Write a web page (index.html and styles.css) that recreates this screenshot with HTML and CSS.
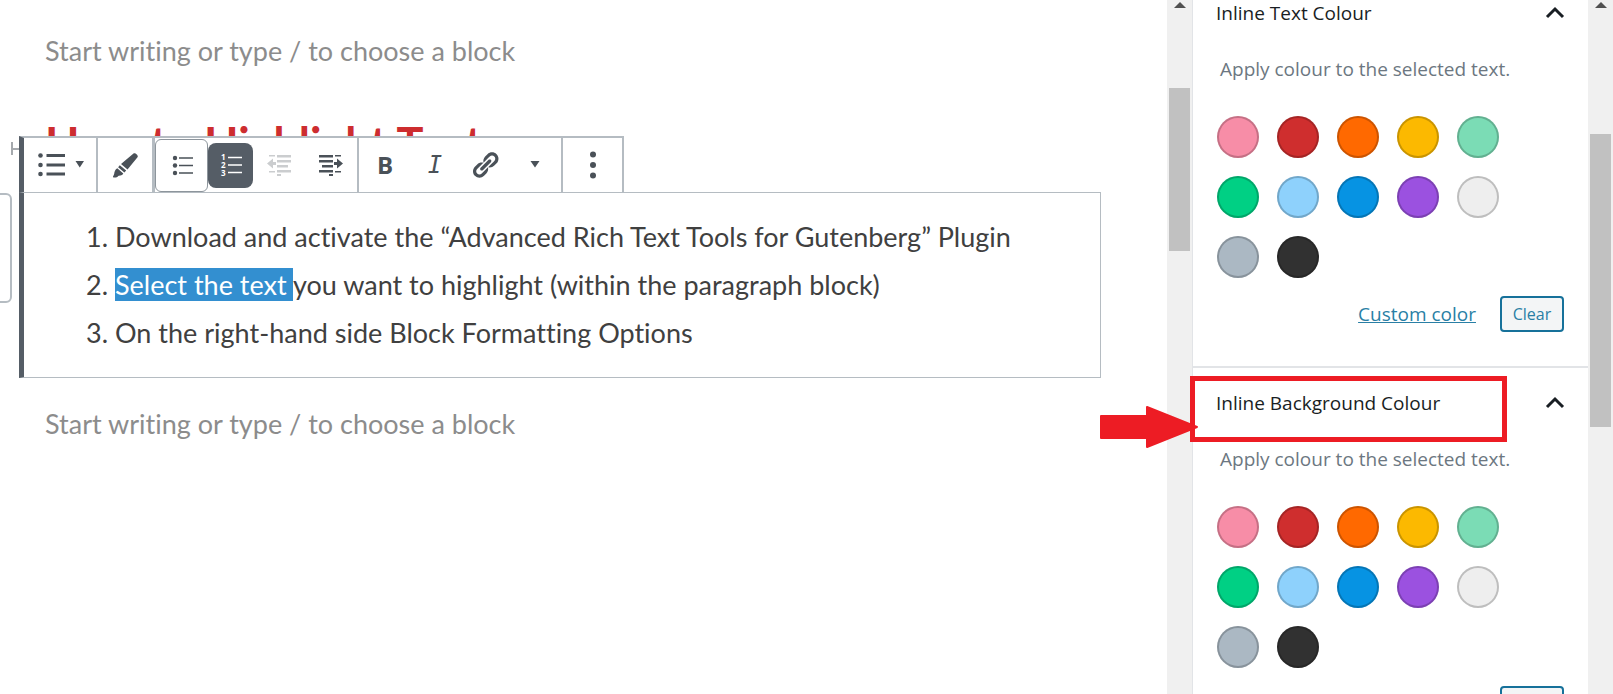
FILE: index.html
```html
<!DOCTYPE html>
<html lang="en">
<head>
    <meta charset="UTF-8">
    <meta name="viewport" content="width=device-width, initial-scale=1.0">
    <title>Edit Post</title>
    <link rel="stylesheet" href="styles.css">
</head>
<body>
    <!-- Editor -->
    <main class="editor">
        <p class="placeholder">Start writing or type / to choose a block</p>
        <h2 class="heading">How to Highlight Text</h2>

        <div class="block">
            <span class="drag-mark"></span>
            <span class="mover"></span>

            <!-- Block Toolbar -->
            <div class="toolbar" role="toolbar" aria-label="Block tools">
                <div class="group">
                    <button class="tool wide" type="button" aria-label="Change block type">
                        <svg width="48" height="30" viewBox="0 0 48 30">
                            <circle cx="4.500" cy="5.500" r="2.300"/><circle cx="4.500" cy="15" r="2.300"/><circle cx="4.500" cy="24" r="2.300"/>
                            <path d="M10.500 4h18.500v3H10.500zM10.500 13.500h18.500v3H10.500zM10.500 22.500h18.500v3H10.500zM39.500 11h8.500l-4.250 6.500z"/>
                        </svg>
                    </button>
                </div>
                <div class="group brush">
                    <button class="tool" type="button" aria-label="Style">
                        <svg width="30" height="30" viewBox="0 0 30 30">
                            <path d="M23.500 3.500c1.500-1.500 5.500 2 4 3.800L17.500 19.500l-6.500-5.500zM9.800 15.200l6.400 5.400-1.800 2-6.300-5.400zM7.300 18.200l6 5.200c-1.800 3-3.800 1.500-5 2.600-1.200 1.500-3.600 1.800-5.300 1.200-.3-1 1-1.800 1.200-3.400.2-2 .9-4.400 3.100-5.600z"/>
                        </svg>
                    </button>
                </div>
                <div class="group lists">
                    <button class="tool outlined" type="button" aria-label="Bulleted list">
                        <svg width="24" height="24" viewBox="0 0 24 24">
                            <circle cx="5" cy="5" r="2.200"/><circle cx="5" cy="12.500" r="2.200"/><circle cx="5" cy="20" r="2.200"/>
                            <path d="M9 4.200h14v1.600H9zM9 11.700h14v1.600H9zM9 19.200h14v1.600H9z"/>
                        </svg>
                    </button>
                    <button class="tool active" type="button" aria-label="Numbered list" aria-pressed="true">
                        <svg width="24" height="24" viewBox="0 0 24 24">
                            <text x="2" y="7">1</text><text x="2" y="15">2</text><text x="2" y="23">3</text>
                            <path d="M9 3.700h14v1.600H9zM9 11.200h14v1.600H9zM9 18.700h14v1.600H9z"/>
                        </svg>
                    </button>
                    <button class="tool" type="button" aria-label="Outdent" disabled>
                        <svg width="24" height="24" viewBox="0 0 24 24">
                            <path d="M2 2h6v1.500H2zM10 2h14v2.500H10zM10 7h14v2.500H10zM10 12h11v2.500H10zM10 17h14v2.500H10zM2 18h6v1.500H2zM10 21h4v2h-4zM0 10.500l6-5v3.500h3v3H6v3.500z"/>
                        </svg>
                    </button>
                    <button class="tool" type="button" aria-label="Indent">
                        <svg width="24" height="24" viewBox="0 0 24 24">
                            <path d="M0 2h14v2.500H0zM0 7h14v2.500H0zM3 12h11v2.500H3zM0 17h14v2.500H0zM16 2h6v1.500h-6zM16 18h6v1.500h-6zM10 21h4v2h-4zM24 10.500l-6-5v3.500h-3v3h3v3.500z"/>
                        </svg>
                    </button>
                </div>
                <div class="group format">
                    <button class="tool bold" type="button" aria-label="Bold">B</button>
                    <button class="tool italic" type="button" aria-label="Italic">I</button>
                    <button class="tool" type="button" aria-label="Link">
                        <svg width="30" height="30" viewBox="0 0 20 20">
                            <path d="M17.740 2.760c1.680 1.690 1.680 4.410 0 6.100l-1.530 1.520c-1.120 1.120-2.700 1.470-4.140 1.090l2.620-2.610.76-.77.76-.76c.84-.84.84-2.200 0-3.040-.84-.85-2.200-.85-3.040 0l-.77.76-3.380 3.380c-.37-1.440-.02-3.020 1.100-4.140l1.520-1.530c1.690-1.680 4.420-1.680 6.100 0zM8.590 13.430l5.340-5.340c.42-.42.42-1.100 0-1.520-.44-.43-1.130-.39-1.530 0l-5.330 5.340c-.42.42-.42 1.100 0 1.520.44.43 1.130.39 1.520 0zm-.76 2.290l4.140-4.150c.38 1.440.03 3.020-1.090 4.140l-1.520 1.530c-1.690 1.680-4.410 1.680-6.100 0-1.680-1.680-1.680-4.420 0-6.100l1.530-1.520c1.120-1.120 2.700-1.470 4.140-1.100l-4.140 4.150c-.85.84-.85 2.200 0 3.050.84.84 2.200.84 3.040 0z"/>
                        </svg>
                    </button>
                    <button class="tool" type="button" aria-label="More rich text controls">
                        <svg width="10" height="10" viewBox="0 0 10 10"><path d="M.5 1h9L5 7.500z"/></svg>
                    </button>
                </div>
                <div class="group">
                    <button class="tool more" type="button" aria-label="More options">
                        <svg width="8" height="30" viewBox="0 0 8 30">
                            <circle cx="4" cy="4.500" r="3"/><circle cx="4" cy="15" r="3"/><circle cx="4" cy="25.500" r="3"/>
                        </svg>
                    </button>
                </div>
            </div>

            <ol class="steps">
                <li>Download and activate the “Advanced Rich Text Tools for Gutenberg” Plugin</li>
                <li><span class="selected">Select the text </span>you want to highlight (within the paragraph block)</li>
                <li>On the right-hand side Block Formatting Options</li>
            </ol>
        </div>

        <p class="placeholder">Start writing or type / to choose a block</p>
    </main>

    <div class="scrollbar">
        <svg class="scroll-arrow" width="12" height="6" viewBox="0 0 12 6"><path d="M0 6l6-6 6 6z"/></svg>
        <div class="thumb editor-thumb"></div>
    </div>

    <!-- Sidebar -->
    <aside class="sidebar">
        <section class="panel">
            <h3 class="panel-title">
                <button class="toggle" type="button" aria-expanded="true">
                    <span>Inline Text Colour</span>
                    <svg width="20" height="14" viewBox="0 0 20 14"><path d="M2 11l8-8 8 8"/></svg>
                </button>
            </h3>
            <p class="hint">Apply colour to the selected text.</p>
            <div class="swatches">
                <button class="swatch pink" type="button" aria-label="Pink"></button>
                <button class="swatch red" type="button" aria-label="Red"></button>
                <button class="swatch orange" type="button" aria-label="Orange"></button>
                <button class="swatch amber" type="button" aria-label="Amber"></button>
                <button class="swatch mint" type="button" aria-label="Mint"></button>
                <button class="swatch green" type="button" aria-label="Green"></button>
                <button class="swatch sky" type="button" aria-label="Sky blue"></button>
                <button class="swatch blue" type="button" aria-label="Blue"></button>
                <button class="swatch purple" type="button" aria-label="Purple"></button>
                <button class="swatch light" type="button" aria-label="Light gray"></button>
                <button class="swatch gray" type="button" aria-label="Gray"></button>
                <button class="swatch dark" type="button" aria-label="Dark gray"></button>
            </div>
            <div class="actions">
                <a href="#">Custom color</a>
                <button class="clear" type="button">Clear</button>
            </div>
        </section>

        <section class="panel">
            <!-- Callout -->
            <span class="callout-box"></span>
            <svg class="callout-arrow" width="100" height="46" viewBox="0 0 100 46">
                <path d="M2 12h46V3l50 20-50 20v-9H2z"/>
            </svg>
            <h3 class="panel-title">
                <button class="toggle" type="button" aria-expanded="true">
                    <span>Inline Background Colour</span>
                    <svg width="20" height="14" viewBox="0 0 20 14"><path d="M2 11l8-8 8 8"/></svg>
                </button>
            </h3>
            <p class="hint">Apply colour to the selected text.</p>
            <div class="swatches">
                <button class="swatch pink" type="button" aria-label="Pink"></button>
                <button class="swatch red" type="button" aria-label="Red"></button>
                <button class="swatch orange" type="button" aria-label="Orange"></button>
                <button class="swatch amber" type="button" aria-label="Amber"></button>
                <button class="swatch mint" type="button" aria-label="Mint"></button>
                <button class="swatch green" type="button" aria-label="Green"></button>
                <button class="swatch sky" type="button" aria-label="Sky blue"></button>
                <button class="swatch blue" type="button" aria-label="Blue"></button>
                <button class="swatch purple" type="button" aria-label="Purple"></button>
                <button class="swatch light" type="button" aria-label="Light gray"></button>
                <button class="swatch gray" type="button" aria-label="Gray"></button>
                <button class="swatch dark" type="button" aria-label="Dark gray"></button>
            </div>
            <div class="actions">
                <button class="clear" type="button" aria-label="Clear"></button>
            </div>
        </section>
    </aside>

    <div class="scrollbar">
        <svg class="scroll-arrow" width="12" height="6" viewBox="0 0 12 6"><path d="M0 6l6-6 6 6z"/></svg>
        <div class="thumb page-thumb"></div>
    </div>
</body>
</html>
```
FILE: styles.css
```css
* { margin: 0; padding: 0; box-sizing: border-box; }
body { display: flex; height: 100vh; overflow: hidden; background: #fff; font-family: "Open Sans", "Noto Sans", sans-serif; color: #191e23; }
button { background: none; border: none; font: inherit; color: inherit; cursor: pointer; }

/* Editor */
.editor { flex: 1; min-width: 0; padding: 27px 66px 0 19px; font-family: Lato, sans-serif; font-size: 27px; line-height: 48px; font-variant-ligatures: none; color: #404040; }
.placeholder { padding-left: 26px; color: #8c8c8c; }
.heading { margin: 38px 0 19px; padding-left: 26px; font-size: 45px; line-height: 60px; font-weight: 700; color: #cd2d2f; }
.block { position: relative; margin-bottom: 22px; padding: 20px 0; background: #fff; border: 1px solid #b5bcc2; border-left: 5px solid #555d66; }
.steps { padding-left: 91px; }
.selected { background: #338fd0; color: #fff; }
.mover { position: absolute; left: -30px; top: 0; width: 18px; height: 110px; border: 2px solid #b5bcc2; border-radius: 0 6px 6px 0; }
.drag-mark { position: absolute; left: -13px; top: -51px; width: 9px; height: 13px; border-left: 2px solid #a5a9ad; background: linear-gradient(#a5a9ad, #a5a9ad) center / 100% 2px no-repeat; }

/* Block Toolbar */
.toolbar { position: absolute; left: -5px; bottom: 100%; display: flex; height: 57px; background: #fff; border: 2px solid #b5bcc2; border-bottom-width: 1px; border-left: 5px solid #555d66; }
.group { display: flex; align-items: center; border-right: 2px solid #b5bcc2; }
.group:last-child { border-right: none; }
.brush { border-right-width: 3px; }
.format { padding: 0 1px; }
.tool { display: flex; align-items: center; justify-content: center; width: 50px; height: 45px; color: #4a5158; }
.tool svg { fill: currentColor; }
.tool:disabled { color: #cbcdcf; }
.lists .tool { width: 52px; }
.tool.wide { width: 72px; }
.tool.more { width: 59px; }
.brush .tool { width: 54px; }
.lists .outlined { width: 53px; height: 53px; border: 1px solid #8d959c; border-radius: 6px; }
.lists .active { width: 45px; background: #555d66; border-radius: 8px; color: #fff; }
.active text { font-family: "Open Sans", sans-serif; font-size: 8px; font-weight: 700; }
.bold { font-family: "Open Sans", sans-serif; font-size: 24px; font-weight: 700; }
.italic { font-family: "DejaVu Sans Mono", monospace; font-size: 24px; font-style: italic; }

/* Scrollbars */
.scrollbar { flex: 0 0 25px; display: flex; flex-direction: column; align-items: center; padding-top: 2px; background: #f0f0f0; }
.scroll-arrow { flex: none; fill: #505050; }
.thumb { width: 21px; background: #c1c1c1; }
.editor-thumb { height: 163px; margin-top: 80px; }
.page-thumb { height: 293px; margin-top: 126px; }

/* Sidebar */
.sidebar { flex: 0 0 396px; border-left: 1px solid #e2e4e7; font-size: 19px; }
.panel { position: relative; height: 390px; padding: 22px 24px 0 23px; border-top: 2px solid #e2e4e7; }
.panel:first-child { margin-top: -24px; }
.panel-title { font-size: 19px; font-weight: 500; line-height: 26px; }
.toggle { display: flex; align-items: center; justify-content: space-between; width: 100%; text-align: left; }
.toggle svg { margin-right: -1px; fill: none; stroke: #191e23; stroke-width: 3; }
.hint { margin-top: 30px; padding-left: 4px; line-height: 26px; color: #6c7781; }
.swatches { display: grid; grid-template-columns: repeat(5, 42px); gap: 18px; margin-top: 34px; padding-left: 1px; }
.swatch { height: 42px; border-radius: 50%; box-shadow: inset 0 0 0 2px rgba(0, 0, 0, 0.2); }
.pink { background: #f78da7; }
.red { background: #cf2e2e; }
.orange { background: #ff6900; }
.amber { background: #fcb900; }
.mint { background: #7bdcb5; }
.green { background: #00d084; }
.sky { background: #8ed1fc; }
.blue { background: #0693e3; }
.purple { background: #9b51e0; }
.light { background: #eeeeee; }
.gray { background: #abb8c3; }
.dark { background: #313131; }
.actions { display: flex; align-items: center; justify-content: flex-end; gap: 24px; margin-top: 18px; }
.actions a { color: #2a7fa5; }
.clear { width: 64px; height: 36px; background: #f3f5f6; border: 2px solid #16719a; border-radius: 4px; font-size: 16px; color: #2a7fa5; }

/* Callout */
.callout-box { position: absolute; left: -3px; top: 8px; width: 317px; height: 66px; border: 5px solid #ed1c24; }
.callout-arrow { position: absolute; left: -94px; top: 36px; fill: #ed1c24; stroke: #ed1c24; stroke-width: 2; stroke-linejoin: round; }
```
